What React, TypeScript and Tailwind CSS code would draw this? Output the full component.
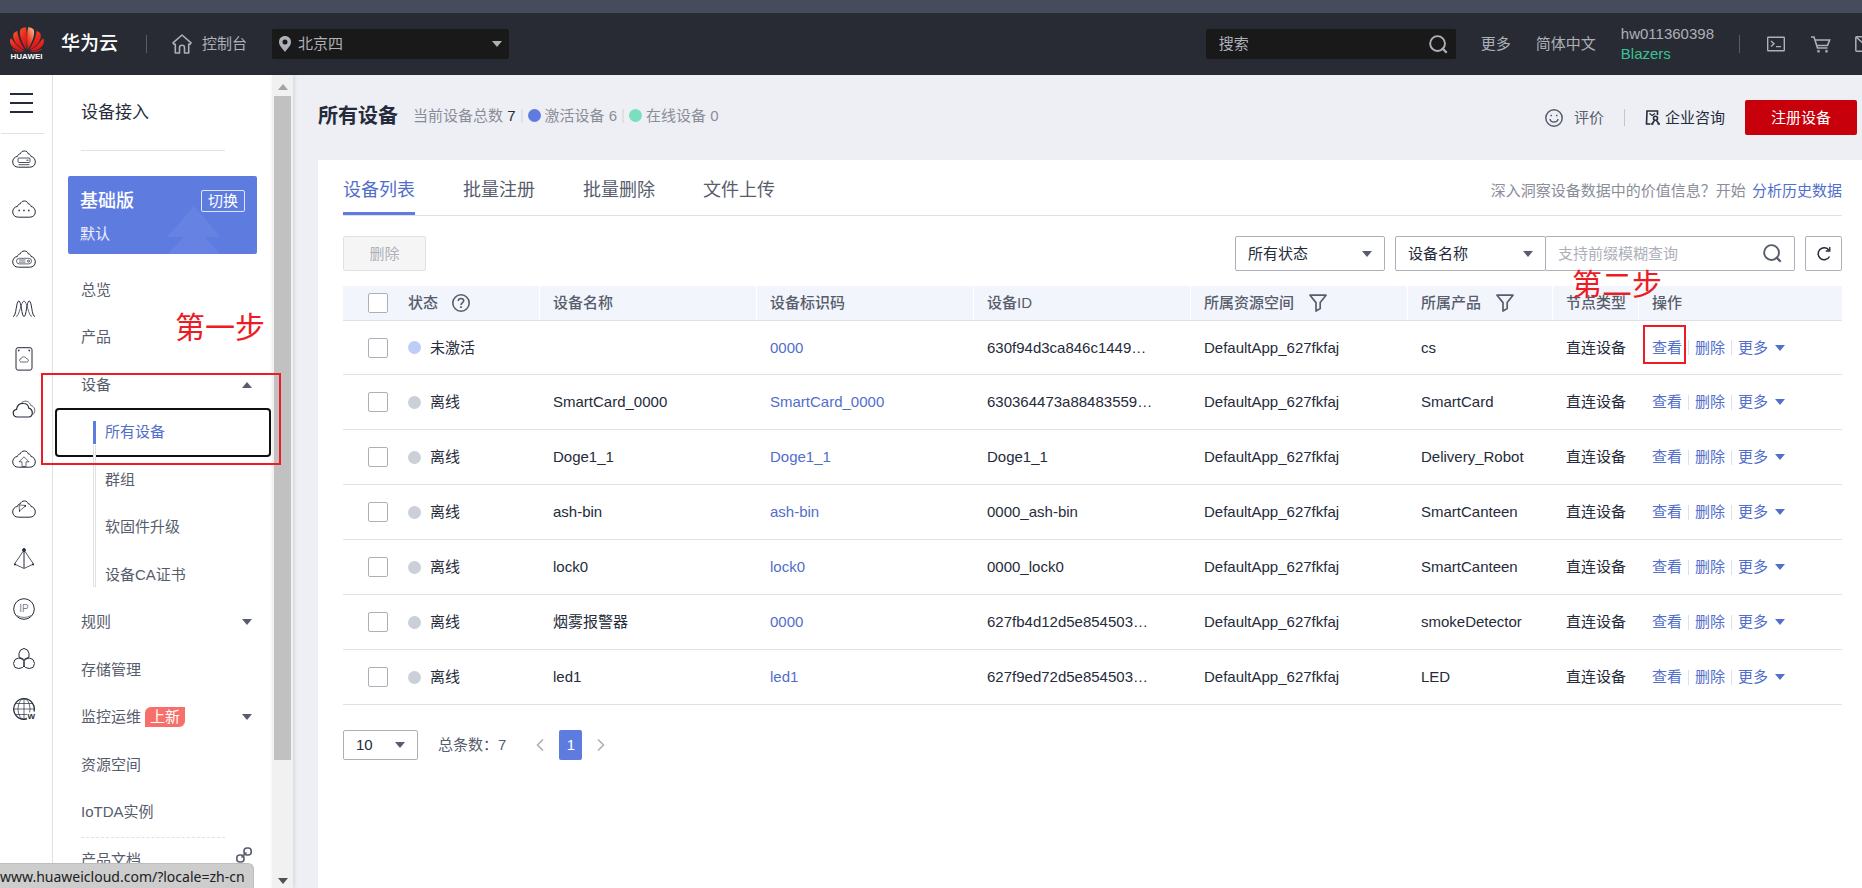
import type { ReactNode } from "react";

type Device = {
  status: string;
  active: boolean;
  name: string;
  code: string;
  id: string;
  product: string;
};

const devices: Device[] = [
  { status: "未激活", active: true, name: "", code: "0000", id: "630f94d3ca846c1449…", product: "cs" },
  { status: "离线", active: false, name: "SmartCard_0000", code: "SmartCard_0000", id: "630364473a88483559…", product: "SmartCard" },
  { status: "离线", active: false, name: "Doge1_1", code: "Doge1_1", id: "Doge1_1", product: "Delivery_Robot" },
  { status: "离线", active: false, name: "ash-bin", code: "ash-bin", id: "0000_ash-bin", product: "SmartCanteen" },
  { status: "离线", active: false, name: "lock0", code: "lock0", id: "0000_lock0", product: "SmartCanteen" },
  { status: "离线", active: false, name: "烟雾报警器", code: "0000", id: "627fb4d12d5e854503…", product: "smokeDetector" },
  { status: "离线", active: false, name: "led1", code: "led1", id: "627f9ed72d5e854503…", product: "LED" },
];

const tabs = ["设备列表", "批量注册", "批量删除", "文件上传"];

function Caret({ up = false, className = "" }: { up?: boolean; className?: string }) {
  return (
    <svg viewBox="0 0 10 6" className={`h-[6px] w-[10px] shrink-0 fill-current ${className}`} aria-hidden="true">
      <path d={up ? "M0 6L5 0L10 6Z" : "M0 0H10L5 6Z"} />
    </svg>
  );
}

function SearchIcon({ className }: { className: string }) {
  return (
    <svg viewBox="0 0 20 20" className={className} fill="none" stroke="currentColor" strokeWidth="2" aria-hidden="true">
      <circle cx="9" cy="9" r="7.8" />
      <path d="M13.8 13.6L18.6 18.6" strokeWidth="2.4" />
    </svg>
  );
}

function FilterIcon() {
  return (
    <svg viewBox="0 0 18 18" className="h-[18px] w-[18px] shrink-0" fill="none" stroke="currentColor" strokeWidth="1.7" aria-hidden="true">
      <path d="M1 1.2H17L11.2 8.6V14.6L7 17V8.6Z" strokeLinejoin="round" />
    </svg>
  );
}

function HuaweiLogo() {
  return (
    <svg viewBox="0 0 34 25" className="h-[25px] w-[34px]" aria-hidden="true">
      <defs>
        <linearGradient id="petal" x1="0.2" y1="0" x2="0.6" y2="1">
          <stop offset="0" stopColor="#f3502a" />
          <stop offset="0.5" stopColor="#ea251c" />
          <stop offset="1" stopColor="#d3161a" />
        </linearGradient>
        <linearGradient id="petalLight" x1="0.8" y1="0" x2="0.3" y2="1">
          <stop offset="0" stopColor="#fbb98c" />
          <stop offset="0.6" stopColor="#ee4b30" />
          <stop offset="1" stopColor="#d8201c" />
        </linearGradient>
      </defs>
      <path fill="url(#petal)" d="M16.3 22.5C12 16 8.6 7.5 10.4 2.6C12 0.8 14.2 0.2 15.9 0.3C17 5.5 17.2 15 16.3 22.5Z" />
      <path fill="url(#petalLight)" d="M17.7 22.5C22 16 25.4 7.5 23.600 2.6C22 0.8 19.8 0.2 18.1 0.3C17 5.5 16.8 15 17.700 22.5Z" />
      <path fill="url(#petal)" d="M15 23C8 20 2.3 13.500 3.200 7.500C3.800 5.700 5.500 4.300 7.400 4C7.800 10 11.300 17.500 15 23Z" />
      <path fill="url(#petal)" d="M19 23C26 20 31.700 13.500 30.800 7.500C30.200 5.700 28.500 4.300 26.600 4C26.200 10 22.700 17.500 19 23Z" />
      <path fill="url(#petal)" d="M14 23.800C7 23.800 0.400 20.500 0 14.500C0.100 13.200 0.500 12 1 11.300C4.500 16.500 9.300 21 14 23.800Z" />
      <path fill="url(#petal)" d="M20 23.800C27 23.800 33.600 20.500 34 14.500C33.900 13.200 33.500 12 33 11.300C29.500 16.500 24.700 21 20 23.800Z" />
      <path fill="#d8201c" d="M13.400 24.500C9.500 25.300 5 24.600 2.600 22.400L2 21.600C5.500 23.400 9.500 24.300 13.400 24.500Z" />
      <path fill="#d8201c" d="M20.600 24.500C24.500 25.300 29 24.600 31.400 22.400L32 21.600C28.500 23.400 24.500 24.300 20.600 24.500Z" />
    </svg>
  );
}

const CLOUD =
  "M6.500 20.200C3 20.200 0.700 18 0.700 15C0.700 12 2.500 9.800 5.500 9.400C5.800 7.800 6.800 6.900 8.200 6.900C9 5 10.300 4 12.300 4C14.500 4 15.800 5.100 16.300 6.900C17.800 7 18.700 7.900 18.900 9.400C21.600 9.900 23.300 12.100 23.300 15C23.300 18 21.200 20.200 17.800 20.200Z";

const railIcons: { label: string; art: ReactNode }[] = [
  {
    label: "弹性云服务器",
    art: (
      <>
        <path d={CLOUD} />
        <rect x="6" y="11" width="12" height="4.500" rx="1" strokeWidth="0.8" />
        <path d="M6.500 17.700H17.500" strokeWidth="0.8" />
        <path d="M14.500 13.200H16.500" />
      </>
    ),
  },
  {
    label: "云耀服务器",
    art: (
      <>
        <path d={CLOUD} />
        <path d="M6.500 13.500H8M11.200 13.500H12.700M16 13.500H17.500" strokeWidth="1.600" />
      </>
    ),
  },
  {
    label: "裸金属服务器",
    art: (
      <>
        <path d={CLOUD} />
        <rect x="4.500" y="11.300" width="15" height="5.600" rx="2.800" strokeWidth="0.7" />
        <path d="M7 13H13.500M7 15.100H13.500" strokeWidth="0.7" />
        <circle cx="16.500" cy="14.100" r="1" strokeWidth="0.800" />
      </>
    ),
  },
  {
    label: "弹性伸缩",
    art: (
      <>
        <path d="M1 19.500C4.500 19.500 4 4 6.800 4C9.500 4 9.500 19.500 12 19.500C14.500 19.500 14.500 4 17.200 4C20 4 19.500 19.500 23 19.500" />
        <path d="M4 19.500C7.500 19.500 9 4 12 4C15 4 16.500 19.500 20 19.500" strokeWidth="0.700" />
      </>
    ),
  },
  {
    label: "云硬盘",
    art: (
      <>
        <rect x="4" y="0.700" width="16" height="22.400" rx="2" />
        <path d="M6 3.500H7.500M16.500 3.500H18" strokeWidth="1.300" />
        <path d="M9.500 15C7 15 7 12 9 11.700C9.600 9.300 13.800 9.300 14.500 11.700C17 12 17 15 14.500 15Z" strokeWidth="0.700" />
      </>
    ),
  },
  {
    label: "专属云",
    art: (
      <>
        <path d="M5.500 20C0.500 19.700 -0.500 13.500 4.500 12.300C5.500 7.500 9 6.300 11.500 6.500C15 6.500 16.500 9 16.800 11.200C21.500 12.500 21.500 19.500 16.500 20Z" strokeWidth="1.200" />
        <path d="M9 6.500C10.500 4 15 3 17.500 6C18.300 7 18.500 7.500 18.800 8.500C22.500 9 24.500 14 21 17.500" strokeWidth="0.700" />
      </>
    ),
  },
  {
    label: "云备份",
    art: (
      <>
        <path d={CLOUD} />
        <path d="M12 9.800L17 14.800H14V19.500H10V14.800H7Z" strokeWidth="0.700" />
      </>
    ),
  },
  {
    label: "内容分发网络",
    art: (
      <>
        <path d={CLOUD} />
        <path d="M7.500 14L7 7.500M7.500 14L14 8.500L7 8" strokeWidth="0.700" />
        <path d="M7 14H8M12.500 9H14" strokeWidth="1.300" />
      </>
    ),
  },
  {
    label: "弹性负载均衡",
    art: (
      <>
        <path d="M12 2.500V21" />
        <path d="M12 3L2.500 17L12 21.500L21.500 17Z" strokeWidth="0.800" />
        <circle cx="12" cy="3" r="1.400" fill="currentColor" />
        <path d="M2 17.500H4M20 17.500H22" strokeWidth="1.400" />
      </>
    ),
  },
  {
    label: "弹性公网",
    art: (
      <>
        <circle cx="12" cy="12" r="10.300" />
        <path d="M5 18.500C9 21 15 21 19 18.500" strokeWidth="0.600" />
        <text x="12" y="15" fontSize="10" textAnchor="middle" stroke="none" fill="#7d828e" fontFamily="Liberation Sans">IP</text>
      </>
    ),
  },
  {
    label: "虚拟私有云",
    art: (
      <>
        <path d="M12 1.500L15.500 3L17 6.500V10L12 12.500L7 10V6.500L8.500 3Z" strokeLinejoin="round" />
        <path d="M6.800 11L10.500 12.300L12 14.500V19L10.500 20.500L6.800 21.500L3 20.500L1.500 16.500L3 12.500Z" strokeLinejoin="round" />
        <path d="M17.200 11L13.500 12.300L12 14.500V19L13.500 20.500L17.200 21.500L21 20.500L22.500 16.500L21 12.500Z" strokeLinejoin="round" />
      </>
    ),
  },
  {
    label: "域名注册",
    art: (
      <>
        <path d="M16 21.500A10.300 10.300 0 1 1 22 14.500" strokeWidth="1.300" />
        <ellipse cx="12" cy="12" rx="6" ry="10.300" strokeWidth="0.700" />
        <path d="M2 12H22M12 2V22M4 6.500H20M4 17.500H15" strokeWidth="0.700" />
        <rect x="15" y="15.500" width="8.500" height="7.500" fill="#fff" stroke="none" />
        <text x="19.300" y="22" fontSize="8" fontWeight="bold" textAnchor="middle" stroke="none" fill="#252b3a" fontFamily="Liberation Sans">W</text>
      </>
    ),
  },
];

function TopBar() {
  return (
    <header className="shrink-0 border-t-[13px] border-[#464c5b] bg-[#282b33] text-[#adb0b8]">
      <div className="flex h-[62px] items-center overflow-hidden">
        <a href="#home" className="ml-[9px] flex w-[35px] shrink-0 flex-col items-center" aria-label="HUAWEI">
          <HuaweiLogo />
          <span className="font-['Liberation_Sans',sans-serif] text-[8px] leading-[10px] font-bold text-white">HUAWEI</span>
        </a>
        <a href="#cloud" className="ml-[17px] shrink-0 text-[19px] font-medium whitespace-nowrap text-white">
          华为云
        </a>
        <span className="ml-7 h-[18px] w-px shrink-0 bg-[#575d6c]" />
        <a href="#console" className="ml-[25px] flex shrink-0 items-center gap-[10px] whitespace-nowrap">
          <svg viewBox="0 0 20 20" className="h-5 w-5" fill="none" stroke="currentColor" strokeWidth="1.6" strokeLinejoin="round" aria-hidden="true">
            <path d="M10 1L1 8.800L2 10.300H3.300V19H7.500V13.500C7.500 10.500 12.500 10.500 12.500 13.500V19H16.700V10.300H18L19 8.800Z" />
          </svg>
          控制台
        </a>
        <label className="relative ml-[25px] block h-[30px] w-[237px] shrink-0 rounded-xs bg-[#191919]">
          <svg viewBox="0 0 12 16" className="absolute top-[7px] left-[7px] h-4 w-3 fill-current" aria-hidden="true">
            <path fillRule="evenodd" d="M6 0C2.500 0 0 2.500 0 6C0 9.500 3 12 6 16C9 12 12 9.500 12 6C12 2.500 9.500 0 6 0ZM6 3.500A2.500 2.500 0 1 1 6 8.500A2.500 2.500 0 1 1 6 3.500Z" />
          </svg>
          <select aria-label="区域" className="h-full w-full appearance-none bg-transparent pl-[26px]">
            <option>北京四</option>
          </select>
          <Caret className="pointer-events-none absolute top-3 right-[7px]" />
        </label>

        <form className="ml-auto flex h-[30px] w-[250px] shrink-0 items-center rounded-xs bg-[#191919] pr-2 pl-[13px]">
          <input type="text" placeholder="搜索" aria-label="搜索" className="min-w-0 flex-1 bg-transparent outline-none placeholder:text-[#adb0b8]" />
          <button type="button" aria-label="搜索">
            <SearchIcon className="h-[19px] w-[19px]" />
          </button>
        </form>
        <nav className="ml-[25px] flex shrink-0 items-center whitespace-nowrap">
          <a href="#more">更多</a>
          <a href="#lang" className="ml-[25px]">简体中文</a>
          <a href="#account" className="ml-[25px] flex flex-col leading-5">
            <span>hw011360398</span>
            <span className="text-[#3ac295]">Blazers</span>
          </a>
          <span className="ml-[25px] h-[18px] w-px bg-[#575d6c]" />
          <button type="button" aria-label="CloudShell" className="ml-[27px]">
            <svg viewBox="0 0 18 16" className="h-4 w-[18px]" fill="none" stroke="currentColor" strokeWidth="1.4" aria-hidden="true">
              <rect x="0.700" y="1.200" width="16.600" height="13.600" rx="0.500" />
              <path d="M4 5L7 7.700L4 10.400M9 10.600H14" />
            </svg>
          </button>
          <button type="button" aria-label="购物车" className="ml-[26px]">
            <svg viewBox="0 0 20 17" className="h-[17px] w-5" fill="none" stroke="currentColor" strokeWidth="1.600" aria-hidden="true">
              <path d="M0 1H3L6.500 12H16.500M4.200 4H18.600L16.500 9.500H6" />
              <path d="M6.500 14.200H8.500V16.200H6.500ZM14.500 14.200H16.500V16.200H14.500Z" fill="currentColor" strokeWidth="0.400" />
            </svg>
          </button>
          <button type="button" aria-label="消息" className="ml-6 w-[7px] overflow-hidden">
            <svg viewBox="0 0 20 16" className="h-4 w-5" fill="none" stroke="currentColor" strokeWidth="1.500" aria-hidden="true">
              <rect x="0.800" y="0.800" width="18.400" height="14.400" rx="1" />
              <path d="M1 1L10 9L19 1" />
            </svg>
          </button>
        </nav>
      </div>
    </header>
  );
}

function IconRail() {
  return (
    <nav aria-label="服务" className="flex w-[53px] shrink-0 flex-col border-r border-[#dfe1e6]">
      <button type="button" aria-label="菜单" className="mx-px flex h-[59px] w-[43px] flex-col gap-[7px] border-b border-[#dfe1e6] pt-[18px] pl-[9px]">
        <span className="h-[2px] w-[23px] bg-[#252b3a]" />
        <span className="h-[2px] w-[23px] bg-[#252b3a]" />
        <span className="h-[2px] w-[23px] bg-[#252b3a]" />
      </button>
      <ul>
        {railIcons.map((icon) => (
          <li key={icon.label}>
            <a href="#service" aria-label={icon.label} className="flex h-[50px] items-center pl-3 text-[#252b3a]">
              <svg viewBox="0 0 24 24" className="h-6 w-6" fill="none" stroke="currentColor" strokeWidth="1" aria-hidden="true">
                {icon.art}
              </svg>
            </a>
          </li>
        ))}
      </ul>
    </nav>
  );
}

function MenuItem({ children, caret }: { children: ReactNode; caret?: "up" | "down" }) {
  return (
    <a href="#menu" className="flex h-full items-center justify-between pr-5 pl-7">
      <span className="flex items-center gap-1">{children}</span>
      {caret && <Caret up={caret === "up"} />}
    </a>
  );
}

function SideMenu() {
  return (
    <aside className="relative flex w-[240px] shrink-0">
      <div className="flex min-w-0 flex-1 flex-col overflow-hidden text-[#575d6c]">
        <h2 className="mr-[47px] ml-7 h-[76px] shrink-0 border-b border-[#dfe1e6] pt-6 text-[17px] leading-7 text-[#252b3a]">设备接入</h2>
        <section className="relative mx-[15px] mt-[25px] h-[78px] shrink-0 overflow-hidden rounded-xs bg-[#5e7ce0] px-3 text-white">
          <svg viewBox="0 0 54 48" className="absolute right-9 bottom-0 h-12 w-[54px] fill-[#6a86e6]" aria-hidden="true">
            <path d="M27 0L39 14L53 31H38L53 48H1L17 31H0L15 14Z" opacity="0.7" />
          </svg>
          <div className="relative flex items-center justify-between pt-[14px]">
            <strong className="text-lg leading-[22px] font-medium">基础版</strong>
            <button type="button" className="h-[22px] rounded-xs border border-white/80 px-[6px] leading-5">切换</button>
          </div>
          <p className="relative mt-[11px] leading-[22px] text-white/90">默认</p>
        </section>
        <ul className="mt-3 grid h-[570px] shrink-0 auto-rows-fr">
          <li><MenuItem>总览</MenuItem></li>
          <li><MenuItem>产品</MenuItem></li>
          <li><MenuItem caret="up">设备</MenuItem></li>
          <li className="relative row-span-4">
            <ul className="grid h-full auto-rows-fr">
              <li className="-my-px mr-px ml-[2px] rounded border-2 border-[#101010] text-[#526ecc]">
                <a href="#devices" className="flex h-full items-center pl-[23px]">
                  <span className="absolute left-10 h-[23px] w-[3px] bg-[#5e7ce0]" />
                  <span className="pl-[25px]">所有设备</span>
                </a>
              </li>
              {["群组", "软固件升级", "设备CA证书"].map((label) => (
                <li key={label}>
                  <a href="#devices" className="flex h-full items-center pl-[52px]">{label}</a>
                </li>
              ))}
            </ul>
            <span className="absolute top-9 bottom-[12px] left-10 w-[3px] border border-t-0 border-[#dfe1e6] bg-white" />
          </li>
          <li><MenuItem caret="down">规则</MenuItem></li>
          <li><MenuItem>存储管理</MenuItem></li>
          <li>
            <MenuItem caret="down">
              监控运维
              <span className="h-5 rounded-tl-md rounded-br-md bg-[#f66f6a] px-[5px] leading-5 text-white">上新</span>
            </MenuItem>
          </li>
          <li><MenuItem>资源空间</MenuItem></li>
          <li><MenuItem>IoTDA实例</MenuItem></li>
        </ul>
        <div className="mr-[47px] ml-7 mt-px shrink-0 border-t border-dashed border-[#dfe1e6]" />
        <a href="#docs" className="flex shrink-0 items-start justify-between pt-[9px] pr-5 pl-7">
          <span className="pt-[2px]">产品文档</span>
          <svg viewBox="0 0 16 16" className="h-4 w-4" fill="none" stroke="currentColor" strokeWidth="1.600" aria-hidden="true">
            <rect x="0.800" y="8" width="7.200" height="7" rx="3" />
            <rect x="8" y="1" width="7.200" height="7" rx="3" />
            <path d="M5.500 10.500L10.500 5.500" />
          </svg>
        </a>
      </div>
      <div className="flex w-[21px] shrink-0 flex-col items-center bg-[#f1f1f1] pt-[9px] pb-1 shadow-[1px_0_4px_rgba(0,0,0,0.12)]">
        <Caret up className="text-[#a3a3a3]" />
        <div className="mt-[6px] w-[17px] grow-0 basis-[664px] bg-[#c1c1c1]" />
        <Caret className="mt-auto text-[#505050]" />
      </div>
      {/* step 1 marker */}
      <strong className="absolute top-[230px] left-[122px] z-10 text-3xl leading-[45px] font-normal text-[#ed1c24]">第一步</strong>
      <div className="pointer-events-none absolute top-[298px] -left-3 z-10 h-[92px] w-[240px] border-2 border-[#ed1c24]" />
    </aside>
  );
}

function PageHead() {
  return (
    <div className="flex h-[85px] shrink-0 items-center justify-between pr-[5px]">
      <div className="flex items-center pb-1 whitespace-nowrap text-[#8a8e99]">
        <h1 className="text-xl font-bold text-[#252b3a]">所有设备</h1>
        <span className="ml-[15px]">当前设备总数 <b className="font-normal text-[#252b3a]">7</b></span>
        <span className="mx-[5px] h-[14px] w-[2px] bg-[#dfe1e6]" />
        <span className="mr-1 h-[13px] w-[13px] rounded-full bg-[#5e7ce0]" />
        <span>激活设备 6</span>
        <span className="mx-[5px] h-[14px] w-[2px] bg-[#dfe1e6]" />
        <span className="mr-1 h-[13px] w-[13px] rounded-full bg-[#7adfbf]" />
        <span>在线设备 0</span>
      </div>
      <div className="flex items-center whitespace-nowrap">
        <a href="#rate" className="flex items-center gap-[11px] text-[#575d6c]">
          <svg viewBox="0 0 18 18" className="h-[18px] w-[18px]" fill="none" stroke="currentColor" strokeWidth="1.500" aria-hidden="true">
            <circle cx="9" cy="9" r="8.200" />
            <path d="M5 10C5.500 14 12.500 14 13 10" />
            <path d="M5.500 6.500H7M11 6.500H12.500" strokeWidth="1.700" />
          </svg>
          评价
        </a>
        <span className="mx-5 h-[17px] w-px bg-[#c3c6cf]" />
        <a href="#consult" className="flex items-center gap-[5px] text-[#252b3a]">
          <svg viewBox="0 0 15 15" className="h-[15px] w-[15px]" fill="none" stroke="currentColor" strokeWidth="1.600" aria-hidden="true">
            <path d="M5.500 14H1.500L2 1H12.500V5" />
            <path d="M4.500 3.500L7.200 5.500L10 3.500" strokeWidth="1.300" />
            <circle cx="10.500" cy="8.300" r="2" />
            <path d="M7 14L9.300 10.800M14 14L11.700 10.800M6 14H8.500M12.500 14H15" />
          </svg>
          企业咨询
        </a>
        <button type="button" className="ml-5 h-[35px] rounded-xs bg-[#c7000b] px-[26px] text-white">注册设备</button>
      </div>
    </div>
  );
}

function SelectBox({ label, value, className }: { label: string; value: string; className: string }) {
  return (
    <label className={`relative block text-[#252b3a] ${className}`}>
      <select aria-label={label} className="h-full w-full appearance-none rounded-xs border border-[#adb0b8] bg-white pl-3">
        <option>{value}</option>
      </select>
      <Caret className="pointer-events-none absolute top-1/2 right-[13px] -translate-y-1/2 text-[#575d6c]" />
    </label>
  );
}

function Toolbar() {
  return (
    <div className="mt-5 flex h-[35px] items-stretch">
      <button type="button" disabled className="w-[83px] rounded-xs border border-[#dfe1e6] bg-[#f5f5f6] text-[#adb0b8]">删除</button>
      <SelectBox label="状态" value="所有状态" className="ml-auto w-[150px]" />
      <SelectBox label="查询字段" value="设备名称" className="ml-[10px] w-[151px]" />
      <form className="-ml-px flex w-[250px] items-center rounded-xs border border-[#adb0b8] bg-white pr-3 pl-3">
        <input type="text" placeholder="支持前缀模糊查询" aria-label="设备查询" className="min-w-0 flex-1 outline-none placeholder:text-[#adb0b8]" />
        <button type="button" aria-label="查询" className="text-[#575d6c]">
          <SearchIcon className="h-[19px] w-[19px]" />
        </button>
      </form>
      <button type="button" aria-label="刷新" className="ml-[10px] flex w-[37px] items-center justify-center rounded-xs border border-[#adb0b8] text-[#252b3a]">
        <svg viewBox="0 0 14 15" className="h-[15px] w-[14px]" fill="none" stroke="currentColor" strokeWidth="1.500" aria-hidden="true">
          <path d="M12.500 10.500A6 6 0 1 1 12 4.200" />
          <path d="M12.800 1V5H8.800" strokeWidth="1.300" />
        </svg>
      </button>
    </div>
  );
}

function DeviceTable() {
  const th = "border-r border-white pl-[13px] text-left font-medium";
  return (
    <table className="mt-[15px] w-full table-fixed border-separate border-spacing-0 whitespace-nowrap text-[#252b3a]">
      <colgroup>
        <col className="w-[65px]" />
        <col className="w-[132px]" />
        <col className="w-[217px]" />
        <col className="w-[217px]" />
        <col className="w-[217px]" />
        <col className="w-[217px]" />
        <col className="w-[145px]" />
        <col className="w-[86px]" />
        <col className="w-[203px]" />
      </colgroup>
      <thead className="bg-[#f2f5fc] text-[#575d6c]">
        <tr className="h-[34px]">
          <th className="pl-[25px]">
            <input type="checkbox" aria-label="全选" className="block h-5 w-5 appearance-none rounded-xs border border-[#adb0b8] bg-white" />
          </th>
          <th className="border-r border-white text-left font-medium">
            <span className="flex items-center gap-[14px]">
              状态
              <svg viewBox="0 0 18 18" className="h-[18px] w-[18px]" fill="none" stroke="currentColor" strokeWidth="1.600" aria-hidden="true">
                <circle cx="9" cy="9" r="8.200" />
                <path d="M6.300 7C6.300 3.500 11.700 3.700 11.700 6.800C11.700 8.600 9 8.700 9 11" />
                <path d="M9 12.300V14" strokeWidth="1.800" />
              </svg>
            </span>
          </th>
          <th className={th}>设备名称</th>
          <th className={th}>设备标识码</th>
          <th className={th}>设备ID</th>
          <th className={th}><span className="flex items-center gap-[15px]">所属资源空间<FilterIcon /></span></th>
          <th className={th}><span className="flex items-center gap-[15px]">所属产品<FilterIcon /></span></th>
          <th className={`relative ${th}`}>
            节点类型
            {/* step 2 marker */}
            <strong className="absolute -top-[24px] left-[19px] z-10 text-3xl leading-[45px] font-normal text-[#ed1c24]">第二步</strong>
          </th>
          <th className="pl-[13px] text-left font-medium">操作</th>
        </tr>
      </thead>
      <tbody className="[&_td]:border-b [&_td]:border-[#dfe1e6]">
        {devices.map((d, i) => (
          <tr key={d.id} className="h-[55px] first:[&_td]:border-t">
            <td className="pl-[25px]">
              <input type="checkbox" aria-label={`选择 ${d.id}`} className="block h-5 w-5 appearance-none rounded-xs border border-[#adb0b8] bg-white" />
            </td>
            <td>
              <span className="flex items-center gap-[9px]">
                <span className={`h-[13px] w-[13px] rounded-full ${d.active ? "bg-[#beccfa]" : "bg-[#cacfd8]"}`} />
                {d.status}
              </span>
            </td>
            <td className="pl-[13px]">{d.name}</td>
            <td className="pl-[13px]"><a href="#device" className="text-[#526ecc]">{d.code}</a></td>
            <td className="pl-[13px]">{d.id}</td>
            <td className="pl-[13px]">DefaultApp_627fkfaj</td>
            <td className="pl-[13px]">{d.product}</td>
            <td className="pl-[13px]">直连设备</td>
            <td className="pl-[13px]">
              <span className="flex items-center text-[#526ecc]">
                <a href="#view" className="relative">
                  查看
                  {i === 0 && <span className="pointer-events-none absolute -top-3 -left-[9px] h-[39px] w-[43px] border-2 border-[#ed1c24]" />}
                </a>
                <span className="mx-[6px] h-[15px] w-px bg-[#dfe1e6]" />
                <button type="button">删除</button>
                <span className="mx-[6px] h-[15px] w-px bg-[#dfe1e6]" />
                <button type="button" className="flex items-center gap-[7px]">更多<Caret /></button>
              </span>
            </td>
          </tr>
        ))}
      </tbody>
    </table>
  );
}

function Pagination() {
  return (
    <div className="mt-[25px] flex h-[30px] items-center text-[#575d6c]">
      <SelectBox label="每页条数" value="10" className="h-full w-[75px]" />
      <span className="ml-5">总条数：7</span>
      <button type="button" aria-label="上一页" className="ml-[30px] text-[#adb0b8]">
        <svg viewBox="0 0 8 12" className="h-3 w-2" fill="none" stroke="currentColor" strokeWidth="1.600" aria-hidden="true">
          <path d="M7 0.500L1.500 6L7 11.500" />
        </svg>
      </button>
      <button type="button" aria-current="page" className="mx-[15px] h-full w-[23px] rounded-xs bg-[#5e7ce0] text-white">1</button>
      <button type="button" aria-label="下一页" className="text-[#adb0b8]">
        <svg viewBox="0 0 8 12" className="h-3 w-2" fill="none" stroke="currentColor" strokeWidth="1.600" aria-hidden="true">
          <path d="M1 0.500L6.500 6L1 11.500" />
        </svg>
      </button>
    </div>
  );
}

export default function App() {
  return (
    <div className="relative flex h-screen flex-col overflow-hidden bg-white font-['Liberation_Sans','Noto_Sans_CJK_SC',sans-serif] text-[15px] leading-[22px]">
      <TopBar />
      <div className="flex min-h-0 flex-1">
        <IconRail />
        <SideMenu />
        <main className="flex min-w-0 flex-1 flex-col bg-[#eeeff5] pl-[25px]">
          <PageHead />
          <div className="min-h-0 flex-1 bg-white pr-5 pl-[25px]">
            <div className="flex h-14 items-stretch justify-between border-b border-[#dfe1e6]">
              <div role="tablist" className="flex gap-12 text-lg text-[#575d6c]">
                {tabs.map((tab, i) => (
                  <button
                    key={tab}
                    type="button"
                    role="tab"
                    aria-selected={i === 0}
                    className={i === 0 ? "border-b-[3px] border-[#5e7ce0] pt-2 text-[#526ecc]" : "border-b-[3px] border-transparent pt-2"}
                  >
                    {tab}
                  </button>
                ))}
              </div>
              <p className="pt-5 text-[#8a8e99]">
                深入洞察设备数据中的价值信息？开始 <a href="#analysis" className="pl-[2px] text-[#526ecc]">分析历史数据</a>
              </p>
            </div>
            <Toolbar />
            <DeviceTable />
            <Pagination />
          </div>
        </main>
      </div>
      {/* browser link preview */}
      <div className="absolute bottom-0 left-0 z-20 h-[25px] rounded-tr-md border-t border-r border-[#bdbdbd] bg-[#cdcdcd] pr-2 font-['Noto_Sans',sans-serif] text-sm leading-[26px] whitespace-nowrap text-[#202020]">
        www.huaweicloud.com/?locale=zh-cn
      </div>
    </div>
  );
}
